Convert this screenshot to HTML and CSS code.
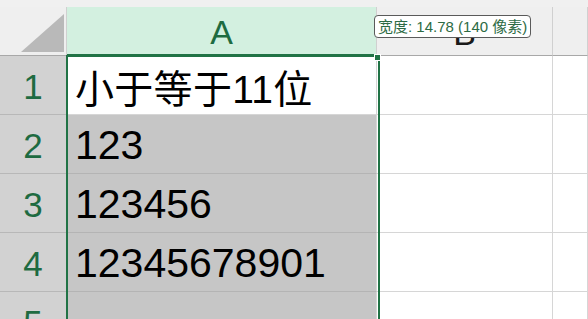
FILE: index.html
```html
<!DOCTYPE html>
<html lang="zh-CN">
<head>
    <meta charset="utf-8" />
    <title>小于等于11位</title>
    <link rel="stylesheet" href="styles.css">
</head>
<body>
    <div class="sheet">
        <div class="strip"></div>
        <div class="strip sel"></div>
        <div class="strip"></div>
        <div class="strip"></div>

        <div class="corner"><div class="tri"></div></div>
        <div class="colhead sel">A</div>
        <div class="colhead">B</div>
        <div class="colhead"></div>

        <div class="rowhead">1</div>
        <div class="cell active">小于等于11位</div>
        <div class="cell"></div>
        <div class="cell"></div>

        <div class="rowhead">2</div>
        <div class="cell shade">123</div>
        <div class="cell"></div>
        <div class="cell"></div>

        <div class="rowhead">3</div>
        <div class="cell shade">123456</div>
        <div class="cell"></div>
        <div class="cell"></div>

        <div class="rowhead">4</div>
        <div class="cell shade">12345678901</div>
        <div class="cell"></div>
        <div class="cell"></div>

        <div class="rowhead">5</div>
        <div class="cell shade"></div>
        <div class="cell"></div>
        <div class="cell"></div>

        <div class="selbox"></div>
        <div class="handle"></div>
        <div class="tip">宽度: 14.78 (140 像素)</div>
    </div>
</body>
</html>
```
FILE: styles.css
```css
body {
    margin: 0;
    background: #fff;
    overflow: hidden;
}

.sheet {
    position: relative;
    display: grid;
    grid-template-columns: 67px 310px 176px 1fr;
    grid-template-rows: 7px 49px 59px 59px 59px 59px 59px;
    width: 588px;
    height: 319px;
    overflow: hidden;
    font-family: "Liberation Sans", "Noto Sans CJK SC", sans-serif;
}

.strip {
    background: #f0f0f0;
}

.corner {
    background: #efefef;
    border-right: 1px solid #d0d0d0;
    border-bottom: 1px solid #a8a8a8;
    position: relative;
}

.tri {
    position: absolute;
    right: 2px;
    bottom: 3px;
    width: 0;
    height: 0;
    border-left: 43px solid transparent;
    border-bottom: 38px solid #b9b9b9;
}

.colhead {
    background: #efefef;
    border-right: 1px solid #d0d0d0;
    border-bottom: 1px solid #a8a8a8;
    display: flex;
    align-items: center;
    justify-content: center;
    font-size: 34px;
    color: #1a1a1a;
    padding-top: 4px;
}

.colhead.sel {
    background: #d3f0e0;
    color: #1e6b41;
    border-bottom: 2px solid #217346;
}

.rowhead {
    background: #d2d2d2;
    border-right: 1px solid #b6b6b6;
    border-bottom: 1px solid #b8b8b8;
    color: #1e6b41;
    font-size: 35px;
    display: flex;
    align-items: center;
    justify-content: center;
    padding-top: 4px;
}

.cell {
    border-right: 1px solid #d6d6d6;
    border-bottom: 1px solid #d6d6d6;
    font-size: 41px;
    color: #000;
    display: flex;
    align-items: center;
    padding-left: 8px;
    padding-top: 2px;
}

.cell.active {
    background: #fff;
    font-size: 39px;
    letter-spacing: 0.3px;
}

.cell.shade {
    background: #c6c6c6;
    border-bottom-color: #b4b4b4;
}

.selbox {
    position: absolute;
    left: 66px;
    top: 55px;
    width: 310px;
    height: 280px;
    border: 2px solid #217346;
    pointer-events: none;
}

.handle {
    position: absolute;
    left: 374px;
    top: 54px;
    width: 5px;
    height: 5px;
    background: #217346;
    border: 1px solid #fff;
}

.tip {
    position: absolute;
    left: 374px;
    top: 15px;
    height: 21px;
    padding: 0 3px;
    line-height: 21px;
    background: #fff;
    border: 1px solid #5a5a5a;
    border-radius: 4px;
    color: #2d6b44;
    font-size: 15px;
    white-space: nowrap;
}
```
